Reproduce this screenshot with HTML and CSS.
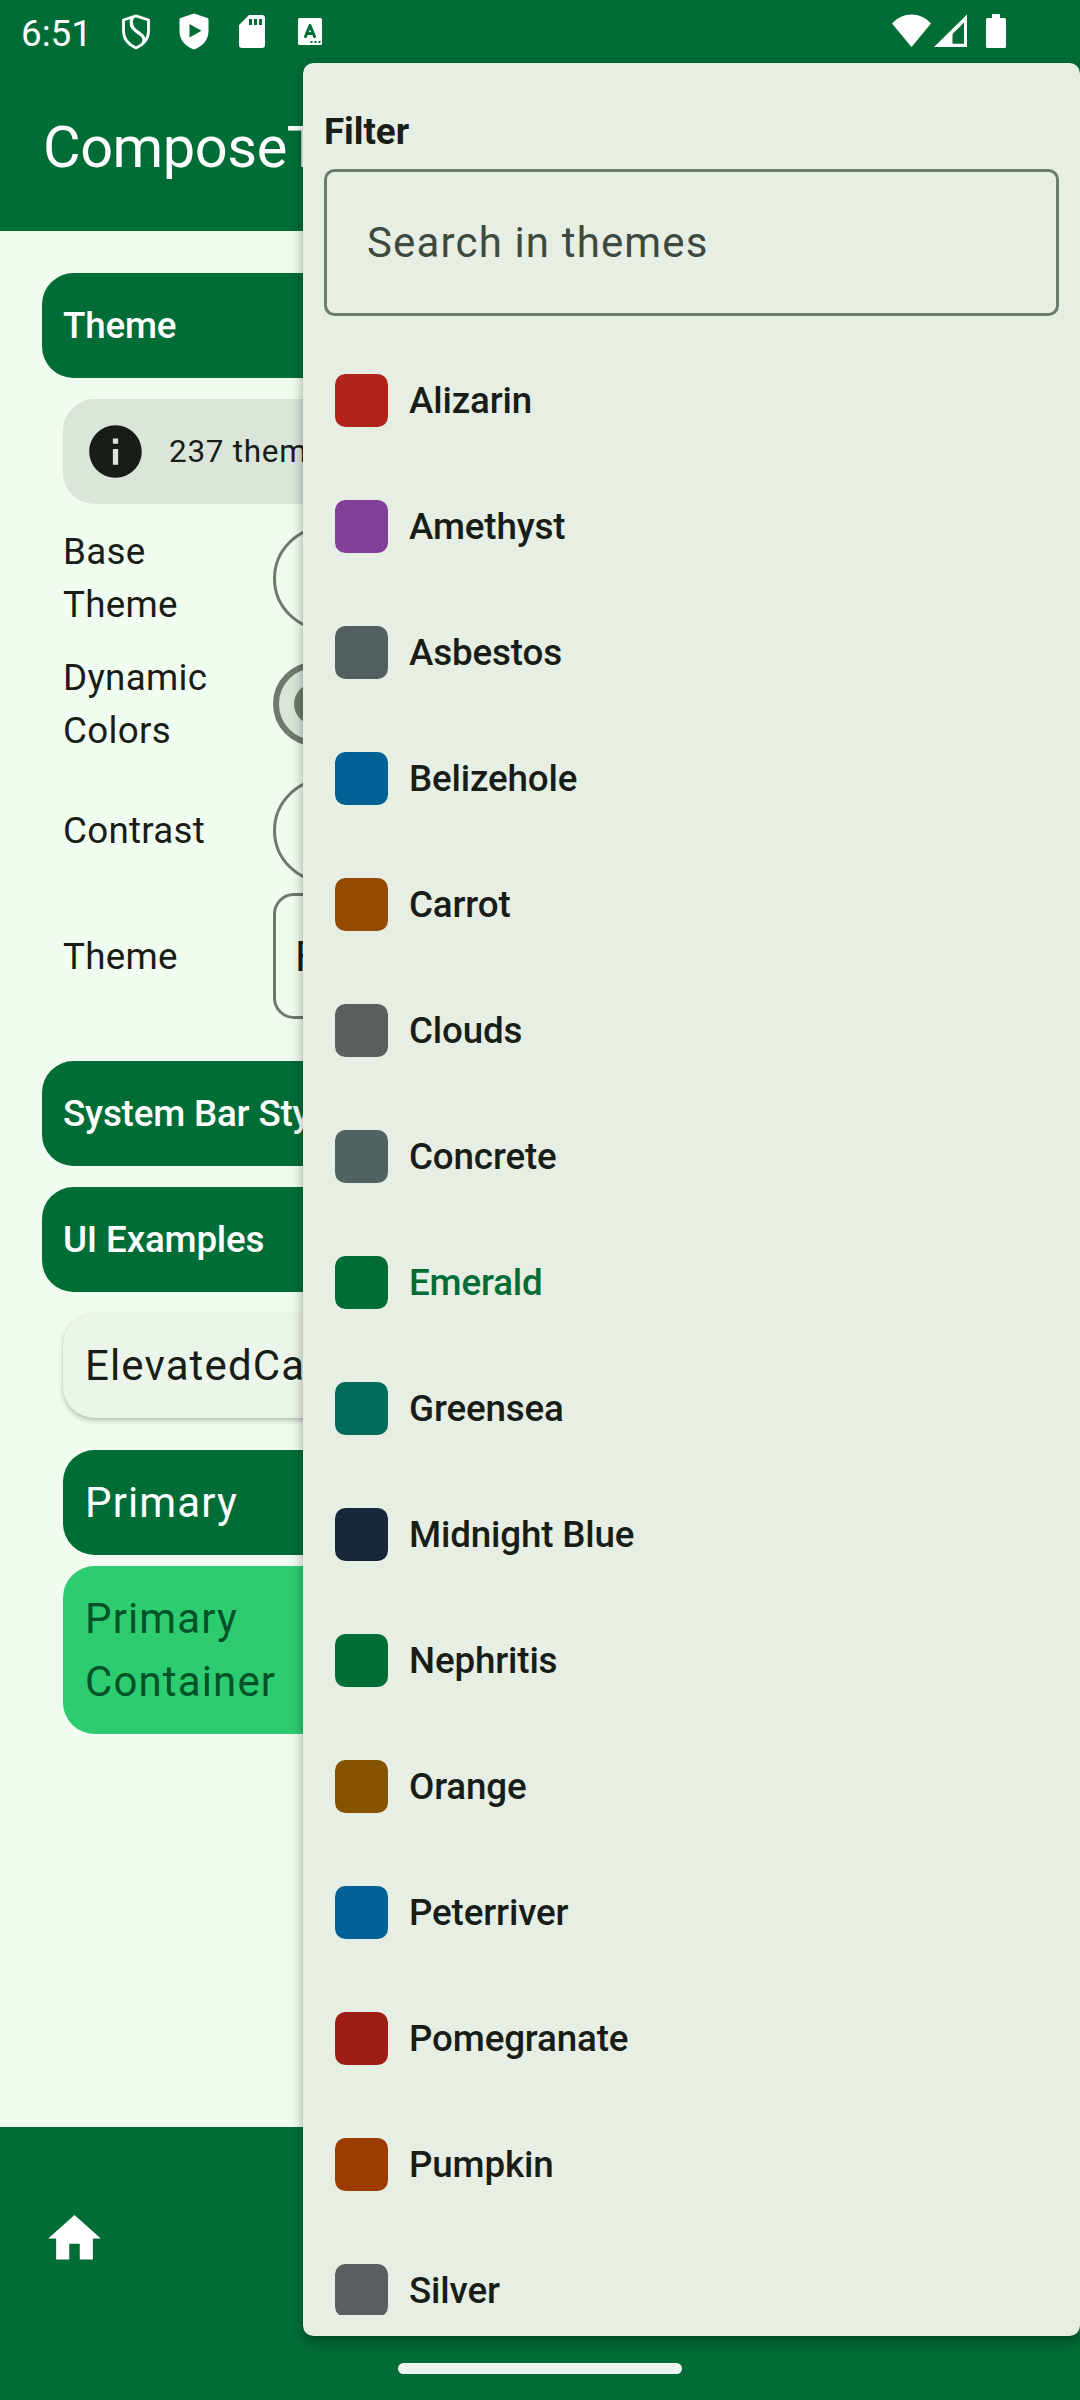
FILE: index.html
```html
<!DOCTYPE html>
<html lang="en">
<head>
<meta charset="utf-8">
<title>ComposeThemer</title>
<link rel="stylesheet" href="styles.css">
</head>
<body>
<div class="screen">
  <header class="top">
    <div class="status">
      <span class="clock">6:51</span>
      <div class="notices">
        <svg class="i-shield" width="30" height="36" viewBox="0 0 30 36" fill="none" stroke="#fff" stroke-width="2.8"><path d="M15 1.8 27.500 6v11c0 8-5 13.500-12.500 17C7.500 30.500 2.500 25 2.500 17V6Z" stroke-linejoin="round"/><path stroke-width="3.200" d="M11.500 3C9 9 10 13.500 15 17c6.500 4.500 9.500 6.500 7.500 11.500"/></svg>
        <svg class="i-play" width="30" height="37" viewBox="0 0 30 37"><path fill="#fff" fill-rule="evenodd" d="M15 .5 28.500 5q1 .4 1 1.500V18c0 9-6 15.500-14.500 18.500C6.500 33.500.5 27 .5 18V6.500q0-1.100 1-1.500ZM10.500 11v13.500l12-6.700Z"/></svg>
        <svg class="i-sd" width="26" height="33" viewBox="0 0 26 33"><path fill="#fff" fill-rule="evenodd" d="M10 0h13a3 3 0 0 1 3 3v27a3 3 0 0 1-3 3H3a3 3 0 0 1-3-3V10ZM10 4v6h3V4Zm5 0v6h3V4Zm5 0v6h3V4Z"/></svg>
        <svg class="i-a" width="24" height="27" viewBox="0 0 24 27"><rect width="24" height="27" rx="1.500" fill="#fff"/><path d="M7.500 18.500 12 7.500l4.500 11M8.500 15.500h7" fill="none" stroke="#006d37" stroke-width="3" stroke-linejoin="round" stroke-linecap="round"/><path d="M12.500 23h2v2h-2zM16.500 23h2v2h-2zM20.500 23h2v2h-2z" fill="#006d37"/></svg>
      </div>
      <svg class="signals" width="116" height="36" viewBox="0 0 116 36" fill="#fff"><path d="M0 9.500C11-2.500 28-2.500 39 9.500L19.500 33Z"/><path fill-rule="evenodd" d="M75 .5V33H42ZM72 8.500 60.500 20v9.700H72Z"/><path d="M100 0h8v4h4.500q1.500 0 1.500 1.500v27q0 1.500-1.500 1.500h-17Q94 34 94 32.500v-27Q94 4 95.500 4h4.500Z"/></svg>
    </div>
    <h1 class="title">ComposeT</h1>
  </header>

  <main class="content">
    <section class="group">
      <h2 class="head">Theme</h2>
      <div class="info">
        <svg width="63" height="63" viewBox="0 0 24 24"><path fill="#181d18" d="M12 2C6.480 2 2 6.480 2 12s4.480 10 10 10 10-4.480 10-10S17.520 2 12 2zm1 15h-2v-6h2v6zm0-8h-2V7h2v2z"/></svg>
        <span>237 themes</span>
      </div>
      <div class="settings">
        <div class="row"><span class="label">Base Theme</span><div class="segmented"></div></div>
        <div class="row"><span class="label">Dynamic Colors</span><div class="switch"><div class="thumb"></div></div></div>
        <div class="row"><span class="label single">Contrast</span><div class="segmented"></div></div>
        <div class="row"><span class="label single">Theme</span><div class="select">Flat UI</div></div>
      </div>
    </section>
    <h2 class="head">System Bar Style</h2>
    <section class="group examples">
      <h2 class="head">UI Examples</h2>
      <div class="card elevated">ElevatedCard</div>
      <div class="card primary">Primary</div>
      <div class="card container">Primary<br>Container</div>
    </section>
  </main>

  <footer class="bottom">
    <svg width="63" height="63" viewBox="0 0 24 24"><path fill="#fff" d="M10 20v-6h4v6h5v-8h3L12 3 2 12h3v8z"/></svg>
  </footer>

  <div class="menu">
    <div class="filter">Filter</div>
    <div class="search">Search in themes</div>
    <ul class="list">
      <li class="item"><i class="swatch alizarin"></i>Alizarin</li>
      <li class="item"><i class="swatch amethyst"></i>Amethyst</li>
      <li class="item"><i class="swatch asbestos"></i>Asbestos</li>
      <li class="item"><i class="swatch belizehole"></i>Belizehole</li>
      <li class="item"><i class="swatch carrot"></i>Carrot</li>
      <li class="item"><i class="swatch clouds"></i>Clouds</li>
      <li class="item"><i class="swatch concrete"></i>Concrete</li>
      <li class="item selected"><i class="swatch emerald"></i>Emerald</li>
      <li class="item"><i class="swatch greensea"></i>Greensea</li>
      <li class="item"><i class="swatch midnight"></i>Midnight Blue</li>
      <li class="item"><i class="swatch emerald"></i>Nephritis</li>
      <li class="item"><i class="swatch orange"></i>Orange</li>
      <li class="item"><i class="swatch belizehole"></i>Peterriver</li>
      <li class="item"><i class="swatch pomegranate"></i>Pomegranate</li>
      <li class="item"><i class="swatch pumpkin"></i>Pumpkin</li>
      <li class="item"><i class="swatch silver"></i>Silver</li>
    </ul>
  </div>
  <div class="handle"></div>
</div>
</body>
</html>
```
FILE: styles.css
```css
* { box-sizing: border-box; }
body { margin: 0; font-family: Roboto, sans-serif; color: #181d18; }
svg { display: block; flex: none; }

.screen {
  position: relative;
  width: 1080px;
  height: 2400px;
  overflow: hidden;
  display: flex;
  flex-direction: column;
  background: #f1fcf0;
}

.top { height: 231px; flex: none; background: #006d37; color: #fff; }
.status { height: 63px; display: flex; align-items: flex-start; padding-left: 21px; }
.clock { width: 100px; font-size: 36.75px; line-height: 43px; padding-top: 12px; }
.notices { display: flex; align-items: flex-start; width: 771px; }
.i-shield { margin: 14px 0 0 0; }
.i-play { margin: 13px 0 0 28px; }
.i-sd { margin: 15px 0 0 30px; }
.i-a { margin: 18px 0 0 33px; }
.signals { margin-top: 14px; }
.title { margin: 0; padding-left: 43px; font-size: 57.75px; font-weight: 400; line-height: 168px; height: 168px; letter-spacing: -.45px; }

.content { flex: 1; padding: 42px; display: flex; flex-direction: column; gap: 21px; }
.group { display: flex; flex-direction: column; gap: 21px; }
.head {
  margin: 0;
  height: 105px;
  flex: none;
  padding-left: 21px;
  border-radius: 31.5px;
  background: #006d37;
  color: #fff;
  font-size: 36.75px;
  font-weight: 500;
  line-height: 105px;
  letter-spacing: -.18px;
}
.info {
  height: 105px;
  margin-left: 21px;
  padding-left: 21px;
  border-radius: 31.5px;
  background: #dbe5da;
  display: flex;
  align-items: center;
  gap: 22px;
  font-size: 31.5px;
  letter-spacing: .7px;
}
.settings { margin: -10px 0 21px 21px; }
.row { height: 126px; display: flex; align-items: center; }
.label { width: 168px; margin-right: 42px; font-size: 36.75px; line-height: 53px; letter-spacing: .28px; }
.single { padding-top: 1px; }
.segmented { flex: 1; height: 105px; border: 3px solid #6d7b6e; border-radius: 53px; }
.switch {
  width: 137px;
  height: 84px;
  padding-left: 15px;
  border: 6px solid #6d7b6e;
  border-radius: 42px;
  background: #dbe5da;
  display: flex;
  align-items: center;
}
.thumb { width: 42px; height: 42px; border-radius: 50%; background: #6d7b6e; }
.select {
  flex: 1;
  height: 126px;
  padding-left: 19px;
  border: 3px solid #6d7b6e;
  border-radius: 21px;
  font-size: 42px;
  line-height: 122px;
  letter-spacing: 1.1px;
}

.card { margin-left: 21px; padding: 21px 21px 21px 22px; border-radius: 31.5px; font-size: 42px; line-height: 63px; letter-spacing: 1.13px; }
.examples { gap: 0; }
.elevated { margin-top: 21px; height: 105px; background: #ecf5ea; box-shadow: 0 3px 5px rgba(0, 0, 0, .22), 0 0 2px rgba(0, 0, 0, .08); }
.primary { margin-top: 32px; height: 105px; background: #006d37; color: #fff; }
.container { margin-top: 11px; height: 168px; background: #2ecc71; color: #005227; }

.bottom { height: 273px; flex: none; padding: 80px 43px; background: #006d37; }

/* Dropdown that opens over the page */
.menu {
  position: absolute;
  top: 63px;
  right: 0;
  width: 777px;
  height: 2273px;
  padding: 42px 21px 21px;
  border-radius: 10.5px;
  background: #e7efe4;
  box-shadow: 0 8px 14px rgba(0, 0, 0, .27), 0 0 8px rgba(0, 0, 0, .1);
  display: flex;
  flex-direction: column;
}
.filter { height: 64px; padding-top: 1px; font-size: 36.75px; font-weight: 700; line-height: 52px; letter-spacing: -.05px; }
.search {
  height: 147px;
  flex: none;
  padding-left: 40px;
  border: 3px solid #6d7b6e;
  border-radius: 10.5px;
  color: #3e4a3f;
  font-size: 42px;
  line-height: 141px;
  letter-spacing: 1.15px;
}
.list { flex: 1; min-height: 0; margin: 21px 0 0; padding: 0; overflow: hidden; list-style: none; }
.item {
  height: 126px;
  padding-left: 11px;
  display: flex;
  align-items: center;
  gap: 21px;
  font-size: 36.75px;
  font-weight: 500;
  letter-spacing: -.15px;
}
.selected { color: #006d37; }
.swatch { width: 53px; height: 53px; border-radius: 10.5px; }
.alizarin { background: #b02419; }
.amethyst { background: #824199; }
.asbestos { background: #535e60; }
.belizehole { background: #006195; }
.carrot { background: #944a00; }
.clouds { background: #5b5f60; }
.concrete { background: #516263; }
.emerald { background: #006d37; }
.greensea { background: #006b59; }
.midnight { background: #17283b; }
.orange { background: #855300; }
.pomegranate { background: #9e1e17; }
.pumpkin { background: #9d3c00; }
.silver { background: #5a5f63; }

/* System gesture bar, drawn above everything */
.handle { position: absolute; left: 398px; top: 2363px; width: 284px; height: 11px; border-radius: 6px; background: #ebf4ef; }
```
